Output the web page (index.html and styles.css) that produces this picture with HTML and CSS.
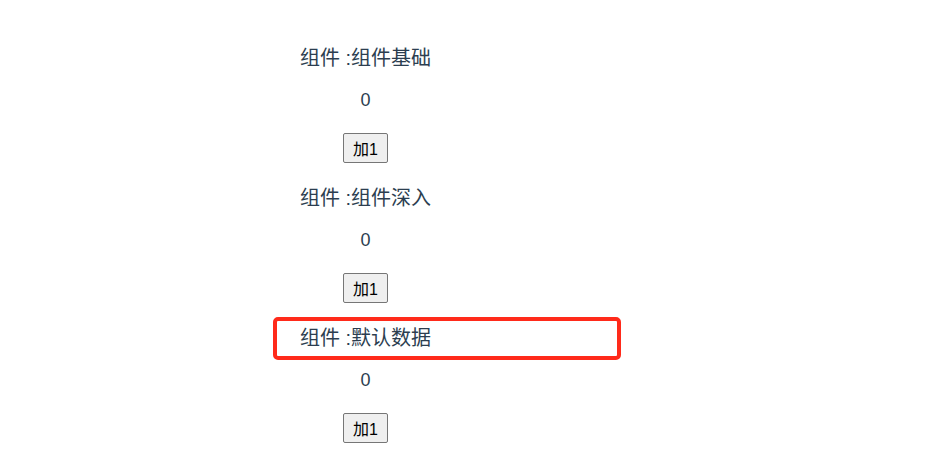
FILE: index.html
```html
<!DOCTYPE html>
<html lang="zh-CN">
<head>
    <meta charset="UTF-8">
    <meta name="viewport" content="width=device-width, initial-scale=1.0">
    <title>组件</title>
    <link rel="stylesheet" href="styles.css">
</head>
<body>
    <div id="app">
        <div class="demo">
            <p class="title">组件 :组件基础</p>
            <p class="count">0</p>
            <button class="add-btn">加1</button>
        </div>
        <div class="demo">
            <p class="title">组件 :组件深入</p>
            <p class="count">0</p>
            <button class="add-btn">加1</button>
        </div>
        <div class="demo">
            <p class="title marked">组件 :默认数据</p>
            <p class="count">0</p>
            <button class="add-btn">加1</button>
        </div>
    </div>
</body>
</html>
```

FILE: styles.css
```css
body {
    margin: 0;
    background: #fff;
}

#app {
    width: 731px;
    padding-top: 44px;
    font-family: "Liberation Sans", Arial, "Noto Sans CJK SC", sans-serif;
    color: #2c3e50;
    text-align: center;
}

.demo {
    display: flex;
    flex-direction: column;
    align-items: center;
}

.title {
    margin: 0;
    font-size: 20px;
    line-height: 28px;
}

.count {
    margin: 16px 0 21px;
    font-size: 18px;
    line-height: 24px;
}

.add-btn {
    width: 45px;
    height: 30px;
    margin-bottom: 21px;
    padding: 0;
    font-family: "Liberation Sans", Arial, "Noto Sans CJK SC", sans-serif;
    font-size: 16px;
    color: #000;
    background: #efefef;
    border: 1px solid #767676;
    border-radius: 2px;
}

/* red annotation frame round the third title */
.marked {
    position: relative;
    align-self: stretch;
}

.marked::after {
    content: "";
    position: absolute;
    left: 273px;
    top: -7px;
    width: 340px;
    height: 35px;
    border: 4px solid #ff2a1a;
    border-radius: 5px;
}
```
